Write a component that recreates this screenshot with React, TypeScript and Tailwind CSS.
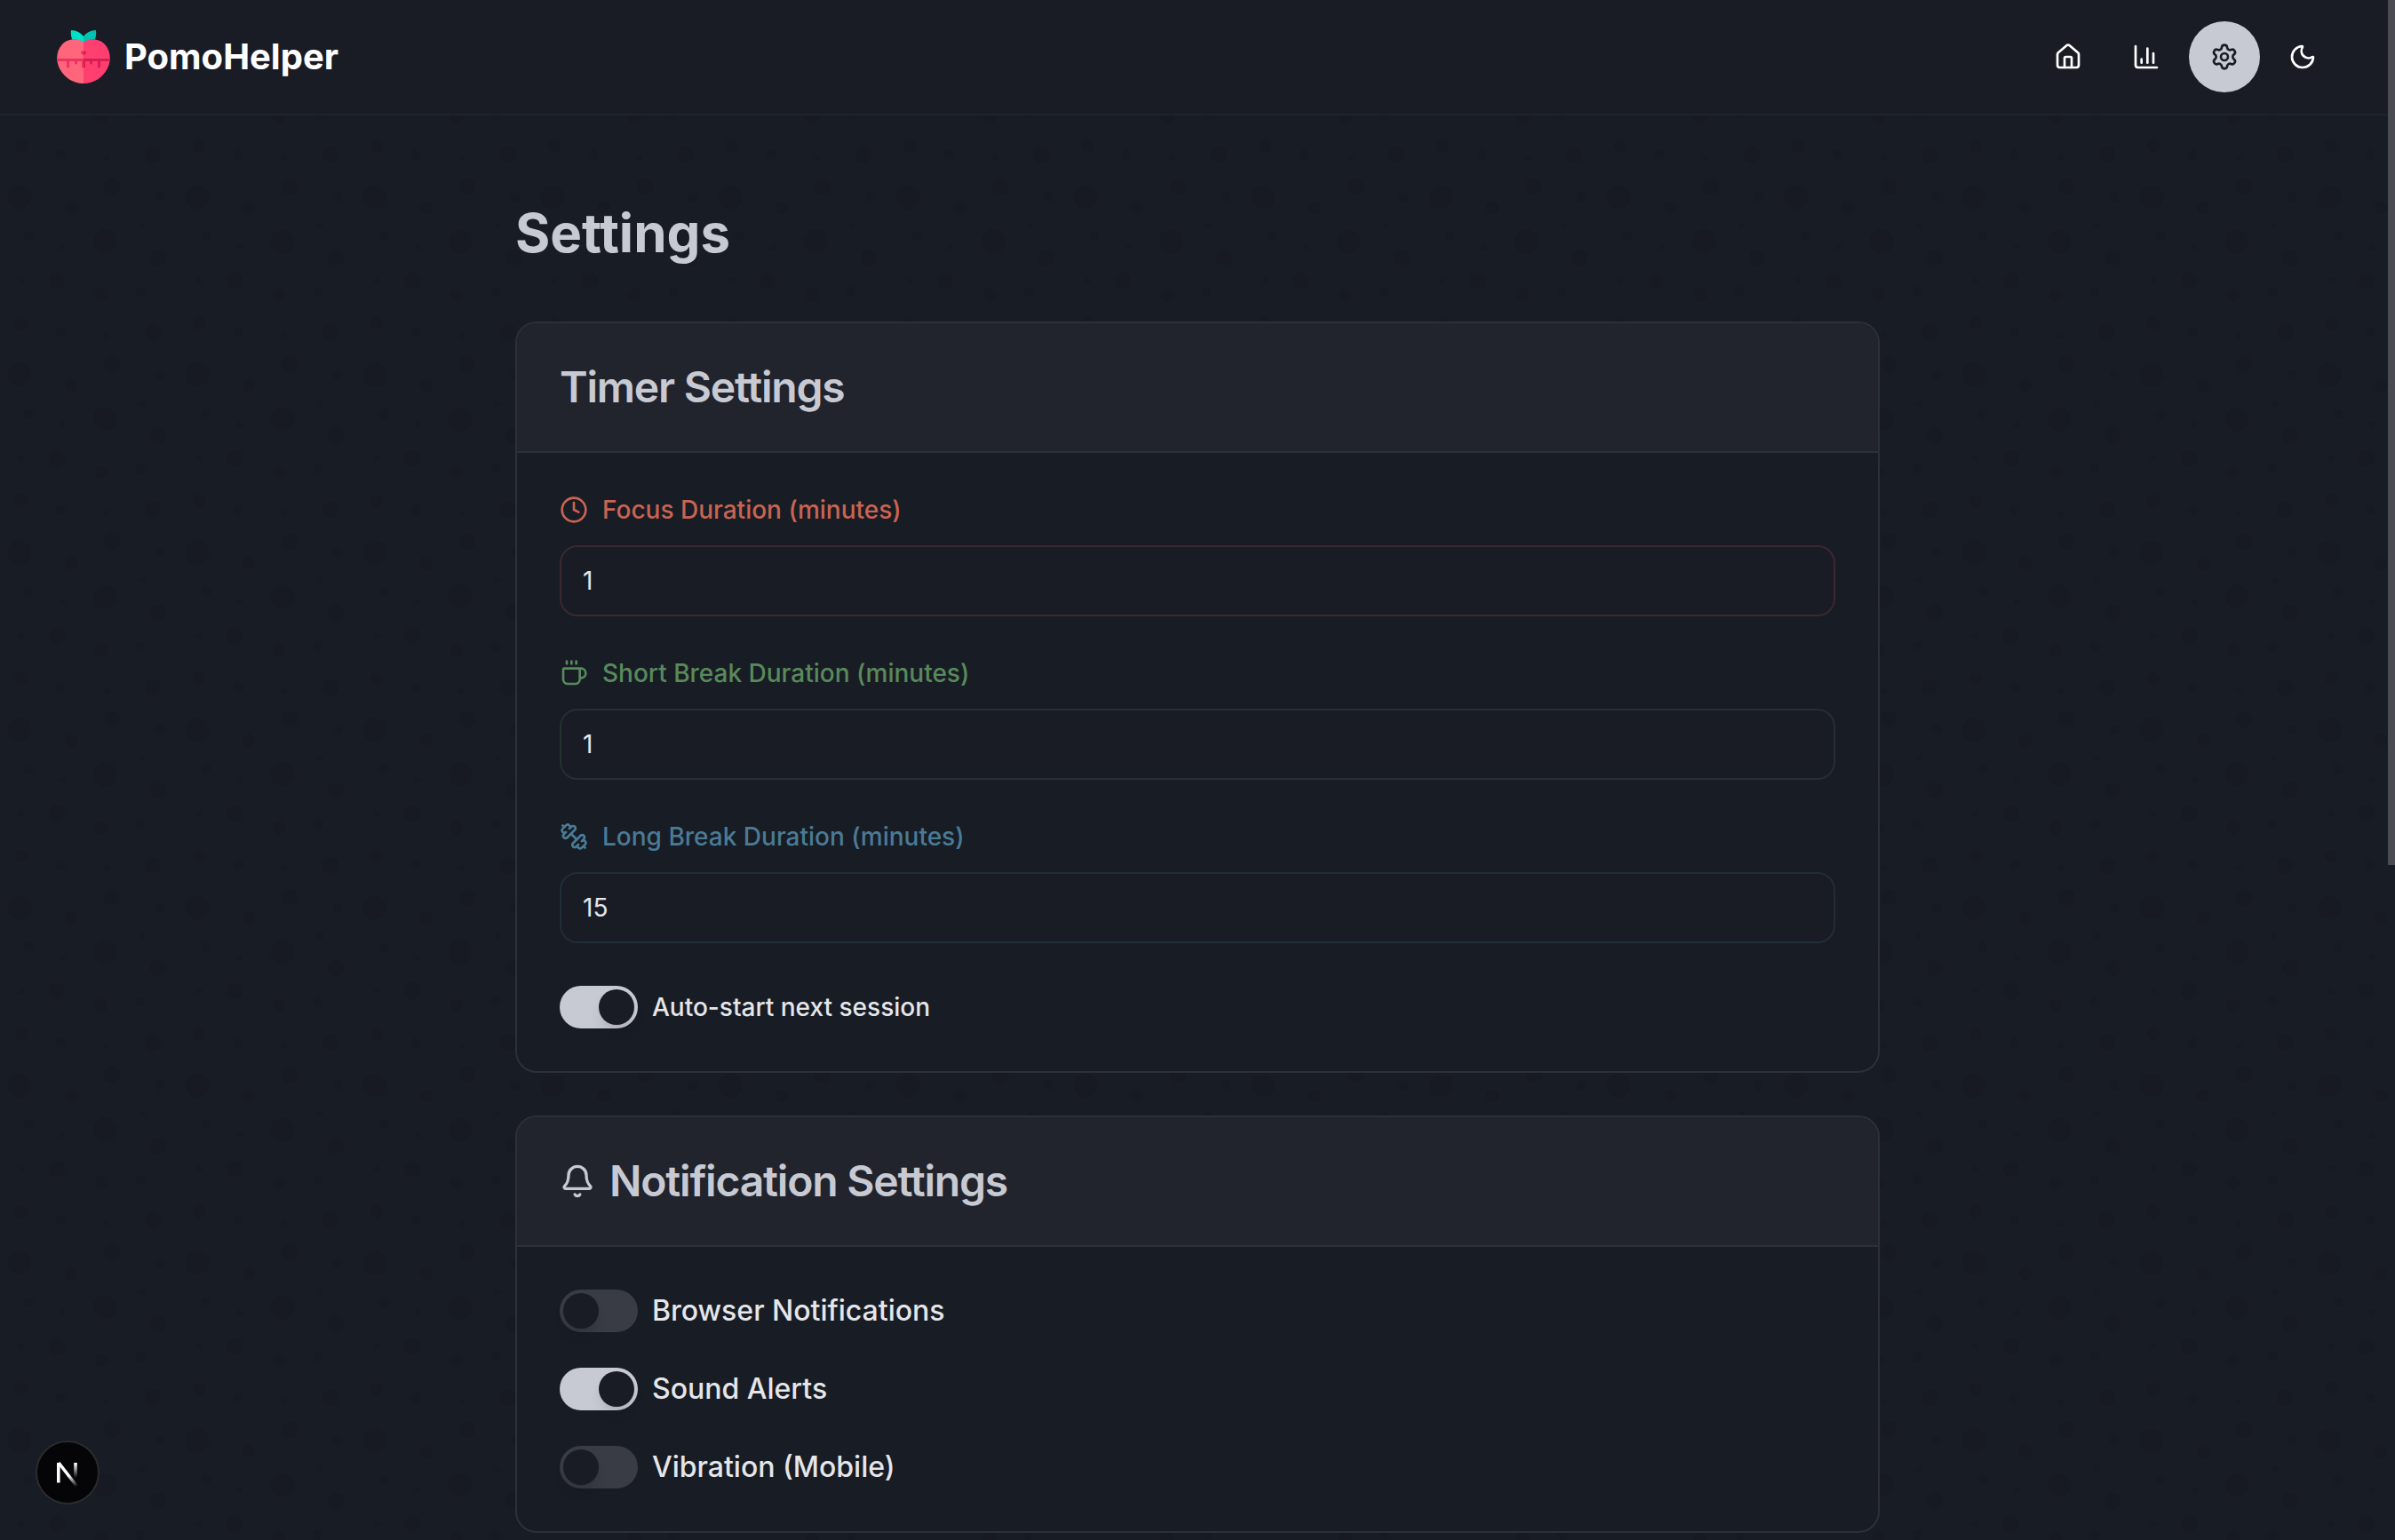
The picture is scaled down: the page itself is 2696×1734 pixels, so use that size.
import { useState, type ReactNode } from "react";
import { Bell, ChartColumn, Clock, Coffee, House, Moon, Settings } from "lucide-react";

const dots = [
  [11, 11, 7], [59, 36, 7],
  [63, 5, 5], [86, 87, 5], [32, 58, 5], [89, 45, 5],
  [12, 82, 4], [40, 17, 4], [57, 66, 4],
  [16, 33, 3], [79, 64, 3], [34, 87, 3], [90, 11, 3],
  [80, 27, 2], [60, 89, 2], [35, 39, 2], [12, 58, 2],
];

function Backdrop() {
  return (
    <svg className="pointer-events-none absolute inset-0 h-full w-full" aria-hidden="true">
      <defs>
        <pattern id="dots" width="200" height="200" patternUnits="userSpaceOnUse">
          {dots.map(([x, y, r]) => (
            <circle key={`${x}-${y}`} cx={x * 2} cy={y * 2} r={r * 2} fill="#171a22" />
          ))}
        </pattern>
      </defs>
      <rect width="100%" height="100%" fill="url(#dots)" />
    </svg>
  );
}

function Logo() {
  return (
    <svg className="size-[60px]" viewBox="0 0 60 60" aria-hidden="true">
      <path d="M30 13C26 9.500 13 8.500 6 16C-1.500 24-1 36 3.500 44C8.500 53 18 60 30 60Z" fill="#ff667c" />
      <path d="M30 13C34 9.500 47 8.500 54 16C61.500 24 61 36 56.500 44C51.500 53 42 60 30 60Z" fill="#ff3f70" />
      <path d="M0.200 32H30V42A1.600 1.600 0 0 1 28 42V35H23V37A1.500 1.500 0 0 1 20 37V35H14V41A1.500 1.500 0 0 1 11 41V35H0.500Z" fill="#f0305f" />
      <path d="M59.800 32H30V42A1.600 1.600 0 0 0 32 42V35H37V37A1.500 1.500 0 0 0 40 37V35H46V41A1.500 1.500 0 0 0 49 41V35H59.500Z" fill="#d81e50" />
      <path d="M30 28.500L26.800 25.600A2.200 2.200 0 0 1 30 23.600Z" fill="#f0305f" />
      <path d="M30 28.500L33.200 25.600A2.200 2.200 0 0 0 30 23.600Z" fill="#d81e50" />
      <path d="M30 7C27 3 22 0 16 0C15.500 4 16 7 17.200 10.500C22 10 27 11 30 13.500Z" fill="#00e0c6" />
      <path d="M30 7C33 3 38 0 44 0C44.500 4 44 7 42.800 10.500C38 10 33 11 30 13.500Z" fill="#00c2b0" />
    </svg>
  );
}

function DumbbellIcon() {
  return (
    <svg className="size-8" viewBox="0 0 24 24" fill="none" stroke="currentColor" strokeWidth="2" strokeLinecap="round" strokeLinejoin="round" aria-hidden="true">
      <path d="M14.4 14.4 9.6 9.6" />
      <path d="M18.657 21.485a2 2 0 1 1-2.829-2.828l-1.767 1.768a2 2 0 1 1-2.829-2.829l6.364-6.364a2 2 0 1 1 2.829 2.829l-1.768 1.767a2 2 0 1 1 2.828 2.829z" />
      <path d="m21.5 21.5-1.4-1.4" />
      <path d="M3.9 3.9 2.5 2.5" />
      <path d="M6.404 12.768a2 2 0 1 1-2.829-2.829l1.768-1.767a2 2 0 1 1-2.828-2.829l2.828-2.828a2 2 0 1 1 2.829 2.828l1.767-1.768a2 2 0 1 1 2.829 2.829z" />
    </svg>
  );
}

function NavButton({ label, active, children }: { label: string; active?: boolean; children: ReactNode }) {
  return (
    <button
      type="button"
      aria-label={label}
      className={
        active
          ? "flex size-20 items-center justify-center rounded-full bg-[#c8cad3] text-[#1a1c25]"
          : "flex size-20 items-center justify-center rounded-full text-white"
      }
    >
      {children}
    </button>
  );
}

function Card({ title, icon, children }: { title: string; icon?: ReactNode; children: ReactNode }) {
  return (
    <section className="overflow-hidden rounded-3xl border-2 border-[#2d3039] bg-[#181c24]">
      <div className="flex items-center gap-4 border-b-2 border-[#2d3039] bg-[#21242d] p-12 text-[#c8cad3]">
        {icon}
        <h2 className="text-5xl leading-none font-semibold tracking-tight">{title}</h2>
      </div>
      {children}
    </section>
  );
}

type FieldProps = { id: string; label: string; value: string; icon: ReactNode; labelClass: string; inputClass: string };

function Field({ id, label, value, icon, labelClass, inputClass }: FieldProps) {
  return (
    <div className="flex flex-col gap-6">
      <label htmlFor={id} className={`flex items-center gap-4 text-[28px] leading-8 font-medium ${labelClass}`}>
        {icon}
        {label}
      </label>
      <input
        id={id}
        type="text"
        inputMode="numeric"
        defaultValue={value}
        className={`h-20 w-full rounded-[20px] border-2 bg-[#191c25] px-6 text-[28px] text-[#e5e6ea] outline-none ${inputClass}`}
      />
    </div>
  );
}

function Toggle({ id, label, on, textClass }: { id: string; label: string; on?: boolean; textClass: string }) {
  const [checked, setChecked] = useState(Boolean(on));
  return (
    <div className="flex items-center gap-4">
      <input
        id={id}
        type="checkbox"
        role="switch"
        checked={checked}
        onChange={(e) => setChecked(e.target.checked)}
        className="flex h-12 w-22 shrink-0 appearance-none items-center rounded-full bg-[#393c44] p-1 before:size-10 before:rounded-full before:bg-[#191c25] before:shadow-lg checked:justify-end checked:bg-[#c8cad3]"
      />
      <label htmlFor={id} className={`font-medium text-[#e5e6ea] ${textClass}`}>
        {label}
      </label>
    </div>
  );
}

function DevBadge() {
  return (
    <button
      type="button"
      aria-label="Open developer tools"
      className="fixed bottom-10 left-10 flex size-[72px] items-center justify-center rounded-full border-2 border-[#2b2b2d] bg-[#050507]"
    >
      <svg className="size-[68px]" viewBox="0 0 68 68" fill="none" strokeWidth="3.600" aria-hidden="true">
        <defs>
          <linearGradient id="diag" gradientUnits="userSpaceOnUse" x1="35" y1="38" x2="44" y2="50">
            <stop stopColor="#fff" />
            <stop offset="1" stopColor="#fff" stopOpacity="0" />
          </linearGradient>
          <linearGradient id="stem" gradientUnits="userSpaceOnUse" x1="43" y1="24" x2="43" y2="40">
            <stop stopColor="#fff" />
            <stop offset="1" stopColor="#fff" stopOpacity="0" />
          </linearGradient>
        </defs>
        <path d="M43 23V40" stroke="url(#stem)" />
        <path d="M24 23L45 50" stroke="url(#diag)" />
        <path d="M23.800 23V45.500" stroke="#fff" />
      </svg>
    </button>
  );
}

export default function App() {
  return (
    <div className="relative min-h-screen bg-[#181d25] font-[Inter,sans-serif]">
      <Backdrop />
      <header className="relative flex items-center justify-between border-b-2 border-[#1f232b] bg-[#1a1c25] px-16 py-6">
        <a href="#home" className="flex items-center gap-4">
          <Logo />
          <span className="text-[40px] leading-14 font-bold text-white">PomoHelper</span>
        </a>
        <nav className="flex items-center gap-2">
          <NavButton label="Home"><House size={32} /></NavButton>
          <NavButton label="Statistics"><ChartColumn size={32} /></NavButton>
          <NavButton label="Settings" active><Settings size={32} /></NavButton>
          <NavButton label="Toggle theme"><Moon size={32} /></NavButton>
        </nav>
      </header>

      <main className="relative mx-auto max-w-[1536px] pt-24">
        <h1 className="mb-16 text-6xl leading-[72px] font-bold text-[#c8cad3]">Settings</h1>

        <div className="flex flex-col gap-12">
          <Card title="Timer Settings">
            <div className="flex flex-col gap-12 p-12">
              <Field id="focus" label="Focus Duration (minutes)" value="1" icon={<Clock size={32} />} labelClass="text-[#c96452]" inputClass="border-[#3b292e]" />
              <Field id="short" label="Short Break Duration (minutes)" value="1" icon={<Coffee size={32} />} labelClass="text-[#588a5c]" inputClass="border-[#24312f]" />
              <Field id="long" label="Long Break Duration (minutes)" value="15" icon={<DumbbellIcon />} labelClass="text-[#4a7b96]" inputClass="border-[#212d39]" />
              <Toggle id="autostart" label="Auto-start next session" on textClass="text-[28px] leading-8" />
            </div>
          </Card>

          <Card title="Notification Settings" icon={<Bell size={40} />}>
            <div className="flex flex-col gap-10 p-12">
              <Toggle id="browser" label="Browser Notifications" textClass="text-[32px] leading-8" />
              <Toggle id="sound" label="Sound Alerts" on textClass="text-[32px] leading-8" />
              <Toggle id="vibration" label="Vibration (Mobile)" textClass="text-[32px] leading-8" />
            </div>
          </Card>
        </div>
      </main>

      <DevBadge />
      <div className="fixed top-0 right-0 h-[974px] w-2 bg-[#4b4c52]" aria-hidden="true" />
    </div>
  );
}
